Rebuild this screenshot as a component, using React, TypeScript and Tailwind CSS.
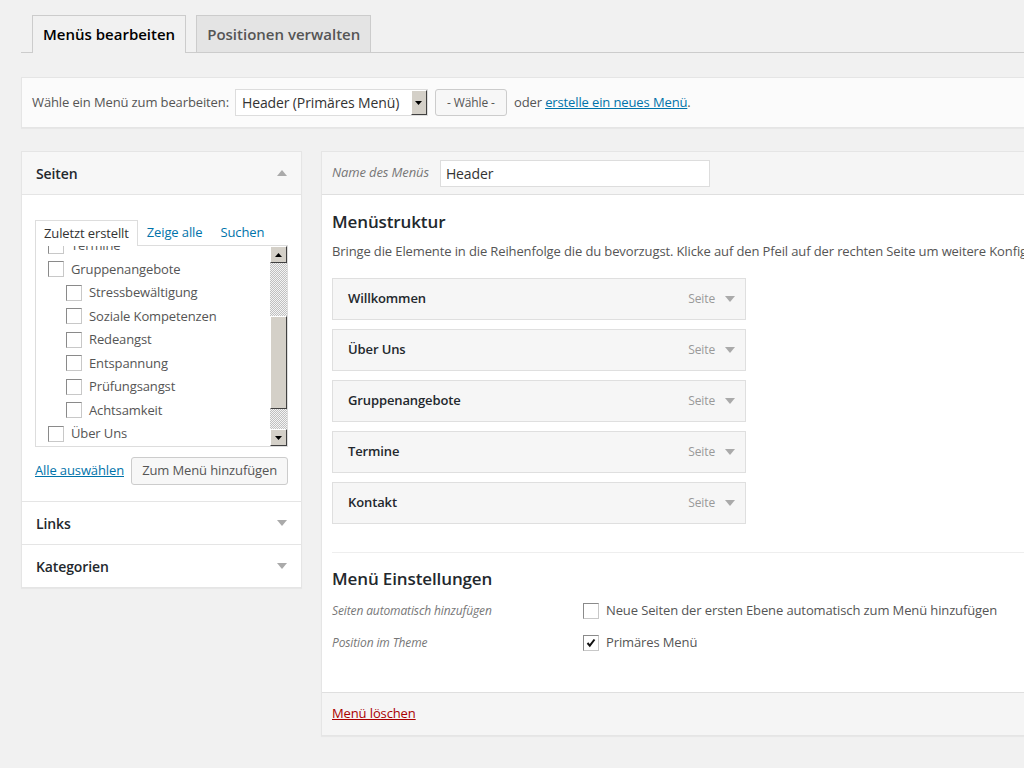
import React from 'react';

const pages = [
  { label: 'Termine', level: 0 },
  { label: 'Gruppenangebote', level: 0 },
  { label: 'Stressbewältigung', level: 1 },
  { label: 'Soziale Kompetenzen', level: 1 },
  { label: 'Redeangst', level: 1 },
  { label: 'Entspannung', level: 1 },
  { label: 'Prüfungsangst', level: 1 },
  { label: 'Achtsamkeit', level: 1 },
  { label: 'Über Uns', level: 0 },
];

const menuItems = ['Willkommen', 'Über Uns', 'Gruppenangebote', 'Termine', 'Kontakt'];

function Triangle({ up = false, color = '#aaa' }: { up?: boolean; color?: string }) {
  return (
    <svg width="10" height="6" viewBox="0 0 10 6">
      <polygon points={up ? '0,6 10,6 5,0' : '0,0 10,0 5,6'} fill={color} />
    </svg>
  );
}

function Checkbox({ checked = false }: { checked?: boolean }) {
  return (
    <span className="flex h-[16px] w-[16px] shrink-0 items-center justify-center border border-t-[#8a8a8a] border-l-[#8a8a8a] border-r-[#c8c8c8] border-b-[#c8c8c8] bg-white">
      {checked && (
        <svg width="10" height="10" viewBox="0 0 10 10">
          <path d="M1.5 5 L3.8 7.6 L8.5 1.5" stroke="#111" strokeWidth="2" fill="none" />
        </svg>
      )}
    </span>
  );
}

function ClassicButton({ up }: { up: boolean }) {
  return (
    <div className="flex h-[17px] w-[17px] items-center justify-center border border-t-white border-l-white border-r-[#404040] border-b-[#404040] bg-[#d4d0c8]">
      <svg width="7" height="4" viewBox="0 0 7 4">
        <polygon points={up ? '0,4 7,4 3.5,0' : '0,0 7,0 3.5,4'} fill="#000" />
      </svg>
    </div>
  );
}

export default function App() {
  return (
    <div className="min-h-screen w-full overflow-hidden bg-[#f1f1f1] font-['Open_Sans',sans-serif] text-[13px] tracking-[-0.12px] text-[#444]">
      <div className="w-[1120px] pl-[21px] pb-[40px]">
        {/* Tabs */}
        <div className="flex border-b border-[#ccc] pl-[11px] pt-[15px] tracking-normal">
          <div className="-mb-px flex h-[38px] items-center border border-b-0 border-[#ccc] bg-[#f1f1f1] px-[10px] text-[15px] font-semibold text-black">
            Menüs bearbeiten
          </div>
          <div className="ml-[10px] flex h-[37px] items-center border border-b-0 border-[#ccc] bg-[#e4e4e4] px-[10px] text-[15px] font-semibold text-[#555]">
            Positionen verwalten
          </div>
        </div>

        {/* Menu selector */}
        <div className="mt-[24px] flex h-[51px] items-center border border-[#e5e5e5] bg-[#fbfbfb] px-[10px] text-[13px] text-[#555] shadow-[0_1px_1px_rgba(0,0,0,0.04)]">
          <span>Wähle ein Menü zum bearbeiten:</span>
          <div className="ml-[6px] flex h-[27px] w-[193px] items-center justify-between border border-[#ddd] bg-white pl-[6px] text-[14px] text-[#333]">
            <span>Header (Primäres Menü)</span>
            <div className="flex h-full w-[16px] items-center justify-center border border-t-white border-l-white border-r-[#404040] border-b-[#404040] bg-[#d4d0c8]">
              <svg width="7" height="4" viewBox="0 0 7 4">
                <polygon points="0,0 7,0 3.5,4" fill="#000" />
              </svg>
            </div>
          </div>
          <button className="ml-[7px] h-[27px] w-[72px] rounded-[3px] border border-[#ccc] bg-[#f7f7f7] text-[12px] text-[#555]">
            - Wähle -
          </button>
          <span className="ml-[7px]">
            oder{' '}
            <a className="text-[#0073aa] underline">erstelle ein neues Menü</a>.
          </span>
        </div>

        <div className="mt-[23px] flex items-start gap-[20px]">
          {/* Left column */}
          <div className="w-[281px] shrink-0 border border-[#e5e5e5] bg-white shadow-[0_1px_1px_rgba(0,0,0,0.04)]">
            <div className="flex h-[43px] items-center justify-between border-b border-[#e5e5e5] bg-[#f7f7f7] pl-[14px] pr-[14px]">
              <span className="text-[14px] font-semibold text-[#23282d]">Seiten</span>
              <Triangle up />
            </div>
            <div className="px-[13px] pt-[25px] pb-[16px]">
              <div className="flex h-[25px] items-stretch">
                <div className="relative z-10 -mb-px flex items-center border border-b-0 border-[#ddd] bg-white px-[8px] text-[#333]">
                  Zuletzt erstellt
                </div>
                <a className="flex items-center px-[9px] text-[#0073aa]">Zeige alle</a>
                <a className="flex items-center px-[9px] text-[#0073aa]">Suchen</a>
              </div>
              <div className="relative flex h-[202px] overflow-hidden border border-[#ddd] bg-white">
                <div className="flex-1 -mt-[12px]">
                  {pages.map((p) => (
                    <div
                      key={p.label}
                      className={`flex h-[23.5px] items-center gap-[7px] text-[#555] ${p.level === 1 ? 'pl-[30px]' : 'pl-[12px]'}`}
                    >
                      <Checkbox />
                      <span>{p.label}</span>
                    </div>
                  ))}
                </div>
                <div className="flex w-[17px] flex-col bg-[repeating-conic-gradient(#c0c0c0_0%_25%,#f4f4f4_0%_50%)] bg-[length:2px_2px]">
                  <ClassicButton up />
                  <div className="flex-1 pt-[53px] pb-[19px]">
                    <div className="h-[93px] border border-t-white border-l-white border-r-[#404040] border-b-[#404040] bg-[#d4d0c8]" />
                  </div>
                  <ClassicButton up={false} />
                </div>
              </div>
              <div className="mt-[10px] flex items-center justify-between">
                <a className="text-[#0073aa] underline">Alle auswählen</a>
                <button className="h-[28px] rounded-[3px] border border-[#ccc] bg-[#f7f7f7] px-[10px] text-[13px] text-[#555]">
                  Zum Menü hinzufügen
                </button>
              </div>
            </div>
            <div className="flex h-[43px] items-center justify-between border-t border-[#e5e5e5] px-[14px]">
              <span className="text-[14px] font-semibold text-[#23282d]">Links</span>
              <Triangle />
            </div>
            <div className="flex h-[43px] items-center justify-between border-t border-[#e5e5e5] px-[14px]">
              <span className="text-[14px] font-semibold text-[#23282d]">Kategorien</span>
              <Triangle />
            </div>
          </div>

          {/* Right column */}
          <div className="-ml-px w-[800px] shrink-0 border border-[#e5e5e5] bg-white shadow-[0_1px_1px_rgba(0,0,0,0.04)]">
            <div className="flex h-[43px] items-center border-b border-[#dfdfdf] bg-[#f5f5f5] px-[10px]">
              <span className="text-[13px] italic text-[#777]">Name des Menüs</span>
              <div className="ml-[11px] flex h-[27px] w-[270px] items-center border border-[#ddd] bg-white pl-[5px] text-[14px] text-[#333]">
                Header
              </div>
            </div>
            <div className="px-[10px] pb-[37px]">
              <h3 className="mt-[15px] text-[17px] font-semibold leading-[24px] text-[#23282d]">Menüstruktur</h3>
              <p className="mt-[7px] whitespace-nowrap leading-[20px] text-[#555]">
                Bringe die Elemente in die Reihenfolge die du bevorzugst. Klicke auf den Pfeil auf der rechten Seite um weitere Konfigurationsoptionen anzuzeigen.
              </p>
              <div className="mt-[17px] flex flex-col gap-[9px]">
                {menuItems.map((m) => (
                  <div
                    key={m}
                    className="flex h-[42px] w-[414px] items-center justify-between border border-[#dfdfdf] bg-[#f6f6f6] pl-[15px] pr-[10px]"
                  >
                    <span className="font-semibold text-[#23282d]">{m}</span>
                    <span className="flex items-center gap-[10px] text-[12px] text-[#999]">
                      Seite
                      <Triangle />
                    </span>
                  </div>
                ))}
              </div>
              <div className="mt-[28px] border-t border-[#eee]" />
              <h3 className="mt-[14px] text-[17px] font-semibold leading-[24px] text-[#23282d]">Menü Einstellungen</h3>
              <div className="mt-[8px] flex h-[24px] items-center">
                <span className="w-[251px] text-[12px] italic text-[#777]">Seiten automatisch hinzufügen</span>
                <Checkbox />
                <span className="ml-[7px] text-[#555]">Neue Seiten der ersten Ebene automatisch zum Menü hinzufügen</span>
              </div>
              <div className="mt-[8px] flex h-[24px] items-center">
                <span className="w-[251px] text-[12px] italic text-[#777]">Position im Theme</span>
                <Checkbox checked />
                <span className="ml-[7px] text-[#555]">Primäres Menü</span>
              </div>
            </div>
            <div className="flex h-[43px] items-center border-t border-[#dfdfdf] bg-[#f5f5f5] px-[10px]">
              <a className="text-[#a00] underline">Menü löschen</a>
            </div>
          </div>
        </div>
      </div>
    </div>
  );
}
